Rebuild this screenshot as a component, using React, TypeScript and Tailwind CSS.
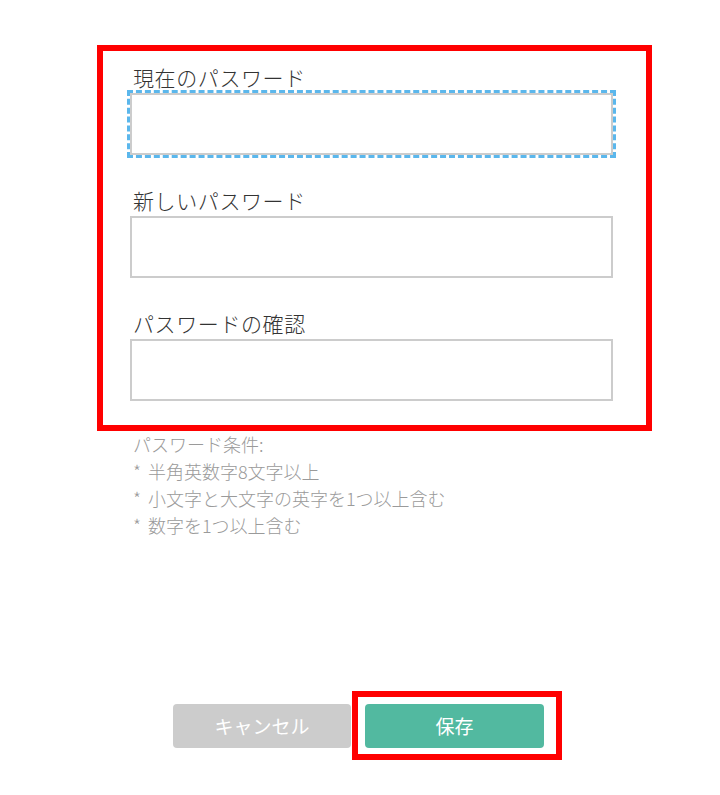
import React from "react";

const font = { fontFamily: '"Noto Sans CJK JP", "Noto Sans", sans-serif' };

function Field({ label, focused }: { label: string; focused?: boolean }) {
  return (
    <div className="flex flex-col">
      <div className="h-[30px] leading-[30px] text-[21px] tracking-[0.6px] font-light text-[#333333] pl-[3px] mb-[1px] whitespace-nowrap">
        {label}
      </div>
      <input
        type="password"
        className={
          focused
            ? "w-[483px] h-[62px] border-2 border-[#cccccc] bg-white outline-3 outline-dashed outline-[#5bb7ec]"
            : "w-[483px] h-[62px] border-2 border-[#cccccc] bg-white outline-none"
        }
      />
    </div>
  );
}

function Cond({ text }: { text: string }) {
  return (
    <div className="flex">
      <span>*</span>
      <span className="ml-[7px]">{text}</span>
    </div>
  );
}

export default function App() {
  return (
    <div className="w-[720px] h-[795px] bg-white overflow-hidden" style={font}>
      <div className="ml-[97px] mt-[45px] w-[555px] border-[6px] border-[#ff0000] pl-[27px] pt-[11px] pb-[24px] flex flex-col gap-[30px]">
        <Field label="現在のパスワード" focused />
        <Field label="新しいパスワード" />
        <Field label="パスワードの確認" />
      </div>
      <div className="ml-[133px] text-[18px] leading-[27px] font-light text-[#9a9a9a] whitespace-nowrap">
        <div>パスワード条件:</div>
        <Cond text="半角英数字8文字以上" />
        <Cond text="小文字と大文字の英字を1つ以上含む" />
        <Cond text="数字を1つ以上含む" />
      </div>
      <div className="ml-[173px] mt-[152px] flex items-start">
        <button className="mt-[13px] w-[178px] h-[44px] rounded-[4px] bg-[#cccccc] text-white text-[19px] leading-[40px]">
          キャンセル
        </button>
        <div className="ml-[1px] border-[6px] border-[#ff0000] pl-[7px] pr-[12px] pt-[7px] pb-[6px]">
          <button className="w-[179px] h-[44px] rounded-[4px] bg-[#52b9a0] text-white text-[19px] leading-[40px]">
            保存
          </button>
        </div>
      </div>
    </div>
  );
}
